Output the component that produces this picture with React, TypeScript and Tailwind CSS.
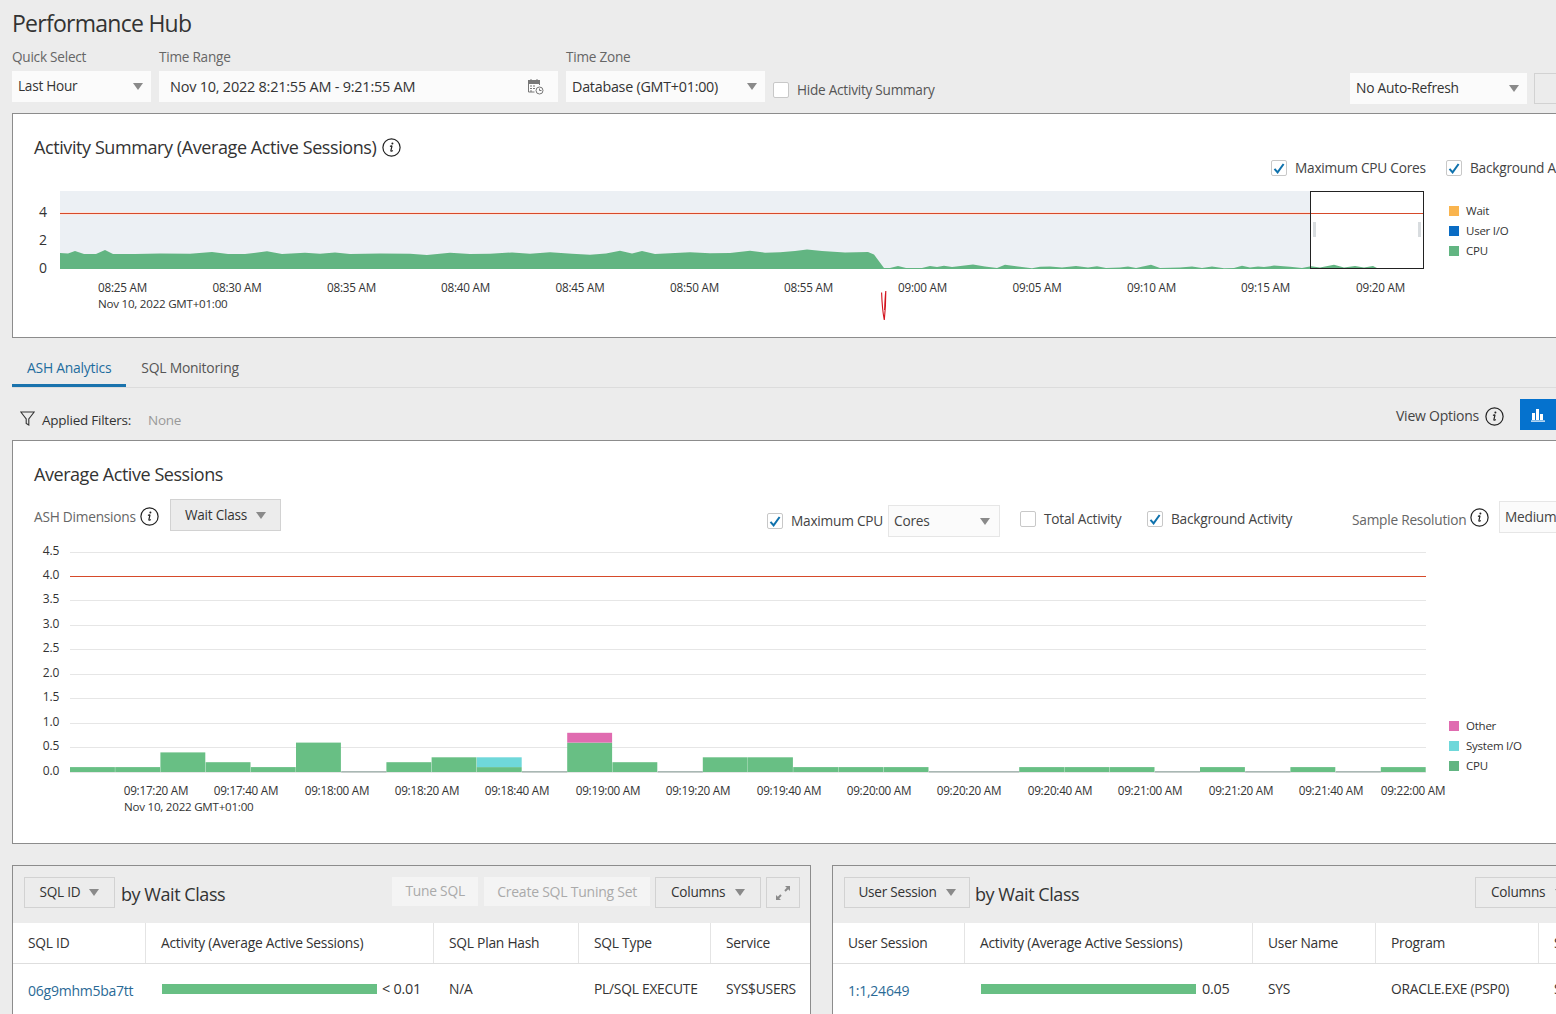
import type { ReactNode } from 'react';

const Caret = ({ className = 'ml-2' }: { className?: string }) => (
  <svg width="10" height="7" viewBox="0 0 10 7" className={`shrink-0 ${className}`}>
    <polygon points="0,0 10,0 5,7" fill="#8a8a8a" />
  </svg>
);

const InfoIcon = ({ size = 19 }: { size?: number }) => (
  <svg width={size} height={size} viewBox="0 0 19 19" className="shrink-0">
    <circle cx="9.5" cy="9.5" r="8.6" fill="none" stroke="#222" strokeWidth="1.2" />
    <circle cx="10.4" cy="5.4" r="1" fill="#222" />
    <path d="M8 8.4c1-.7 2-.9 1.9 0l-1 4.2c-.1.9.8.8 1.9 0" fill="none" stroke="#222" strokeWidth="1.2" />
  </svg>
);

const Check = ({ checked = true }: { checked?: boolean }) => (
  <span className="flex h-4 w-4 shrink-0 items-center justify-center rounded-[2px] border border-[#c8c8c8] bg-white">
    {checked && (
      <svg width="12" height="11" viewBox="0 0 12 11">
        <path d="M1.5 5.8 4.6 9.4 10.6 1" fill="none" stroke="#0f72ad" strokeWidth="2" />
      </svg>
    )}
  </span>
);

const Select = ({ label, className }: { label: string; className: string }) => (
  <div className={`flex items-center justify-between bg-[#fbfbfb] pl-[6px] pr-[8px] text-[#333] ${className}`}>
    <span className="whitespace-nowrap">{label}</span>
    <Caret />
  </div>
);

const Btn = ({ children, className }: { children: ReactNode; className: string }) => (
  <div className={`flex h-[31px] items-center justify-center whitespace-nowrap border border-[#d2d2d2] bg-[#ececec] text-[13.6px] text-[#333] ${className}`}>
    {children}
  </div>
);

const Legend = ({ items, className }: { items: [string, string][]; className: string }) => (
  <div className={`flex flex-col ${className}`}>
    {items.map(([name, color]) => (
      <div key={name} className="flex h-5 items-center gap-[7px] whitespace-nowrap text-[11.5px] text-[#333]">
        <span className="h-[10px] w-[10px]" style={{ backgroundColor: color }} />
        {name}
      </div>
    ))}
  </div>
);

const summaryTicks: [number, string][] = [
  [122.5, '08:25 AM'], [237, '08:30 AM'], [351.5, '08:35 AM'], [465.5, '08:40 AM'],
  [580, '08:45 AM'], [694.5, '08:50 AM'], [808.5, '08:55 AM'], [922.5, '09:00 AM'],
  [1037, '09:05 AM'], [1151.5, '09:10 AM'], [1265.5, '09:15 AM'], [1380.5, '09:20 AM'],
];

const summaryArea = [
  [60, 253], [68, 253.5], [75, 251], [84, 254], [96, 254], [105, 250], [113, 254], [135, 254],
  [160, 253.5], [190, 253.7], [212, 252], [228, 254], [245, 254.1], [267, 251.3], [282, 253.9], [305, 252.7],
  [320, 253.8], [335, 252.5], [350, 253.9], [380, 253.5], [410, 253.7], [427, 255.1], [450, 252.7], [470, 254],
  [490, 253.7], [512, 252.5], [530, 253.8], [550, 252.3], [572, 253.7], [590, 254.8], [606, 253.5], [620, 250.7],
  [632, 253.5], [642, 251.1], [655, 253.9], [675, 253.1], [690, 252.3], [710, 253.3], [730, 252.9], [750, 250.7],
  [765, 252.7], [780, 252.3], [795, 250.9], [807, 249.5], [822, 251.1], [845, 252.5], [868, 251.9], [874, 254.5],
  [884, 268], [890, 268], [898, 266], [906, 268], [922, 268], [930, 266], [937, 267], [944, 265.8], [952, 267],
  [973, 264.6], [985, 266.6], [997, 268], [1005, 264.8], [1020, 266.8], [1032, 268.2], [1040, 266.8], [1050, 266.5],
  [1062, 267.6], [1076, 266], [1088, 267.6], [1097, 266.2], [1106, 268], [1120, 267.6], [1128, 266.4], [1136, 268],
  [1151, 264.8], [1160, 268], [1180, 267.6], [1192, 266.4], [1202, 268], [1212, 266.4], [1224, 268.2], [1234, 268],
  [1242, 265.8], [1250, 267.6], [1258, 266.4], [1264, 267], [1274, 265.6], [1290, 266.8], [1302, 268], [1311, 266.2],
  [1320, 267.6], [1334, 264.8], [1344, 267.6], [1355, 266], [1364, 267.6], [1373, 266], [1378, 268.6],
];
const summaryPath = `M60 269 L${summaryArea.map(([x, y]) => `${x} ${y}`).join(' L')} L1378 269 Z`;

const SummaryChart = () => (
  <svg width="1436" height="135" viewBox="13 185 1436 135" className="shrink-0">
    <rect x="60" y="191" width="1250" height="78" fill="#ecf0f4" />
    <rect x="60" y="212" width="1364" height="3" fill="#fbe6e0" />
    <rect x="1310" y="191" width="114" height="78" fill="#fff" />
    <path d={summaryPath} fill="#62b582" />
    <line x1="60" y1="213.5" x2="1424" y2="213.5" stroke="#d64a2a" />
    <rect x="1310.5" y="191.5" width="113" height="77" fill="none" stroke="#222" />
    <rect x="1313" y="222" width="3" height="15" fill="#d8dcdf" />
    <rect x="1418" y="222" width="3" height="15" fill="#d8dcdf" />
    {[['4', 217], ['2', 245], ['0', 273]].map(([t, y]) => (
      <text key={t} x="43" y={y} fontSize="14" fill="#333" textAnchor="middle">{t}</text>
    ))}
    {summaryTicks.map(([x, t]) => (
      <text key={t} x={x} y="292" fontSize="11.7" fill="#333" textAnchor="middle">{t}</text>
    ))}
    <text x="98" y="308" fontSize="11.6" fill="#333">Nov 10, 2022 GMT+01:00</text>
    <path d="M881.6 292.5c.3 9 1.2 20 2.7 27.5.9-8 1.5-19 1.5-29-.8 7-1 13-1.2 19" fill="none" stroke="#d3141f" strokeWidth="1.1" />
  </svg>
);

// cpu, system io, other
const bars: [number, number, number][] = [
  [0.1, 0, 0], [0.1, 0, 0], [0.4, 0, 0], [0.2, 0, 0], [0.1, 0, 0], [0.6, 0, 0], [0, 0, 0], [0.2, 0, 0], [0.3, 0, 0], [0.1, 0.2, 0],
  [0, 0, 0], [0.6, 0, 0.2], [0.2, 0, 0], [0, 0, 0], [0.3, 0, 0], [0.3, 0, 0], [0.1, 0, 0], [0.1, 0, 0], [0.1, 0, 0], [0, 0, 0],
  [0, 0, 0], [0.1, 0, 0], [0.1, 0, 0], [0.1, 0, 0], [0, 0, 0], [0.1, 0, 0], [0, 0, 0], [0.1, 0, 0], [0, 0, 0], [0.1, 0, 0],
];

const gridLines: [string, number][] = [
  ['4.5', 552], ['4.0', 576], ['3.5', 600], ['3.0', 625], ['2.5', 649], ['2.0', 674], ['1.5', 698], ['1.0', 723], ['0.5', 747], ['0.0', 772],
];

const ashTicks: [number, string][] = [
  [156, '09:17:20 AM'], [246, '09:17:40 AM'], [337, '09:18:00 AM'], [427, '09:18:20 AM'], [517, '09:18:40 AM'],
  [608, '09:19:00 AM'], [698, '09:19:20 AM'], [789, '09:19:40 AM'], [879, '09:20:00 AM'], [969, '09:20:20 AM'],
  [1060, '09:20:40 AM'], [1150, '09:21:00 AM'], [1241, '09:21:20 AM'], [1331, '09:21:40 AM'], [1413, '09:22:00 AM'],
];

const AshChart = () => (
  <svg width="1436" height="280" viewBox="13 540 1436 280" className="shrink-0">
    {gridLines.map(([label, y]) => (
      <g key={label}>
        <line x1="70" y1={y + 0.5} x2="1426" y2={y + 0.5} stroke={label === '4.0' ? '#d64a2a' : '#e6e6e6'} />
        <text x="59" y={y + 3} fontSize="12" fill="#333" textAnchor="end">{label}</text>
      </g>
    ))}
    {bars.map(([cpu, io, other], i) => {
      const x = 70 + i * 45.2;
      const unit = 49;
      if (cpu === 0) return <rect key={i} x={x} y="771" width="45.2" height="1.5" fill="#a9b8b4" />;
      return (
        <g key={i}>
          <rect x={x} y={772 - cpu * unit} width="44.9" height={cpu * unit} fill="#68bf84" />
          {io > 0 && <rect x={x} y={772 - (cpu + io) * unit} width="44.9" height={io * unit} fill="#6fd8da" />}
          {other > 0 && <rect x={x} y={772 - (cpu + other) * unit} width="44.9" height={other * unit} fill="#e06bb0" />}
        </g>
      );
    })}
    {ashTicks.map(([x, t]) => (
      <text key={t} x={x} y="795" fontSize="11.7" fill="#333" textAnchor="middle">{t}</text>
    ))}
    <text x="124" y="811" fontSize="11.6" fill="#333">Nov 10, 2022 GMT+01:00</text>
  </svg>
);

const Cell = ({ children, last }: { children: ReactNode; last?: boolean }) => (
  <div className={`flex h-10 items-center whitespace-nowrap pl-[15px] text-[13.8px] text-[#333] ${last ? '' : 'border-r border-[#e4e4e4]'}`}>
    {children}
  </div>
);

const RowCell = ({ children }: { children: ReactNode }) => (
  <div className="flex h-[50px] items-center whitespace-nowrap pl-[15px] text-[13.8px] text-[#333]">{children}</div>
);

const App = () => (
  <div className="h-[1014px] w-[1556px] overflow-hidden bg-[#ececec] font-['Open_Sans',sans-serif] tracking-[-0.015em] text-[#333]">
    <div className="pl-3">
      <div className="flex h-[46px] items-center text-[23px] tracking-[-0.032em] text-[#333]">Performance Hub</div>

      {/* toolbar */}
      <div className="flex h-[67px] items-start text-[13.6px]">
        <div className="w-[147px] shrink-0">
          <div className="flex h-[25px] items-center pb-[3px] text-[#666]">Quick Select</div>
          <Select label="Last Hour" className="h-[31px] w-[139px]" />
        </div>
        <div className="w-[407px] shrink-0">
          <div className="flex h-[25px] items-center pb-[3px] text-[#666]">Time Range</div>
          <div className="flex h-[31px] w-[399px] items-center justify-between bg-[#fbfbfb] pl-[11px] pr-[14px] text-[14.5px]">
            Nov 10, 2022 8:21:55 AM - 9:21:55 AM
            <svg width="17" height="17" viewBox="0 0 17 17" fill="none" stroke="#777">
              <path d="M1.5 3h11v4M1.5 3v11h6" />
              <rect x="1.5" y="2.5" width="11" height="3" fill="#777" />
              <path d="M4 1v2M10 1v2M3 8h2M6 8h2M3 10.5h2M6 10.5h2M3 13h2" />
              <circle cx="12.5" cy="12.5" r="3.5" />
              <path d="M12.5 10.5v2h2" />
            </svg>
          </div>
        </div>
        <div className="w-[207px] shrink-0">
          <div className="flex h-[25px] items-center pb-[3px] text-[#666]">Time Zone</div>
          <Select label="Database (GMT+01:00)" className="h-[31px] w-[199px] text-[14.3px]" />
        </div>
        <div className="mt-[34px] flex w-[577px] shrink-0 items-center gap-2 whitespace-nowrap text-[#555]">
          <Check checked={false} />
          Hide Activity Summary
        </div>
        <Select label="No Auto-Refresh" className="mt-[27px] h-[31px] w-[177px] shrink-0 text-[13.8px]" />
        <div className="ml-[7px] mt-[27px] h-[31px] w-[60px] shrink-0 border border-[#d2d2d2] bg-[#ececec]" />
      </div>

      {/* activity summary */}
      <div className="h-[225px] w-[1600px] border border-[#8c8c8c] bg-white">
        <div className="ml-[21px] mt-[21px] flex h-6 items-center gap-[6px] text-[18px] tracking-[-0.023em] text-[#333]">
          Activity Summary (Average Active Sessions)
          <InfoIcon />
        </div>
        <div className="flex h-[18px] items-center pl-[1258px] text-[13.7px] text-[#444]">
          <Check />
          <span className="ml-2 w-[151px] whitespace-nowrap">Maximum CPU Cores</span>
          <Check />
          <span className="ml-2 whitespace-nowrap">Background Activity</span>
        </div>
        <div className="mt-2 flex">
          <SummaryChart />
          <Legend
            className="mt-4"
            items={[['Wait', '#f9b44e'], ['User I/O', '#0a6cc4'], ['CPU', '#62b582']]}
          />
        </div>
      </div>

      {/* tabs */}
      <div className="mt-[12px] flex h-[38px] border-b border-[#dcdcdc] text-[13.9px]">
        <div className="flex h-[37px] items-center border-b-[3px] border-[#1a73ad] px-[15px] pt-[2px] text-[#1e6c9e]">ASH Analytics</div>
        <div className="flex h-[37px] items-center px-[15px] pb-[1px] text-[#555]">SQL Monitoring</div>
      </div>

      {/* filters */}
      <div className="mb-[10px] mt-[11px] flex h-[31px] items-center text-[13.5px]">
        <div className="ml-[8px] mt-[11px] flex items-center">
          <svg width="15" height="15" viewBox="0 0 15 15" fill="none" stroke="#333" strokeWidth="1.1" className="-mt-[3px]">
            <path d="M.8 1h13.4L8.8 8v6L6.2 12.5V8z" />
          </svg>
          <span className="ml-[7px] w-[106px] whitespace-nowrap text-[#333]">Applied Filters:</span>
          <span className="text-[#999]">None</span>
        </div>
        <div className="ml-auto flex items-center">
          <span className="mt-[1px] whitespace-nowrap text-[14px] text-[#444]">View Options</span>
          <span className="ml-[6px] mt-[3px]"><InfoIcon /></span>
          <div className="ml-[16px] flex h-[31px] w-[36px] items-center justify-center bg-[#0572ce]">
            <svg width="15" height="14" viewBox="0 0 15 14" fill="#fff">
              <rect x="1" y="5" width="3" height="7" />
              <rect x="5" y="1" width="3" height="11" />
              <rect x="9" y="6" width="3" height="6" />
              <rect x="0" y="12.5" width="14" height="1.2" />
            </svg>
          </div>
        </div>
      </div>

      {/* average active sessions */}
      <div className="h-[404px] w-[1600px] border border-[#8c8c8c] bg-white">
        <div className="ml-[21px] mt-[22px] flex h-[22px] items-center text-[18px] tracking-[-0.025em]">Average Active Sessions</div>
        <div className="mt-[14px] flex h-[38px] items-start text-[13.7px]">
          <span className="ml-[21px] mt-[8px] w-[106px] whitespace-nowrap text-[#666]">ASH Dimensions</span>
          <span className="mt-[8px]"><InfoIcon /></span>
          <Btn className="ml-[11px] h-[32px] w-[111px]">
            Wait Class
            <Caret className="ml-[9px]" />
          </Btn>
          <span className="ml-[486px] mt-[14px]"><Check /></span>
          <span className="ml-2 mt-[12px] w-[97px] whitespace-nowrap text-[#444]">Maximum CPU</span>
          <div className="mt-[6px] flex h-[32px] w-[112px] items-center justify-between border border-[#e6e6e6] bg-[#fbfbfb] pl-[5px] pr-[9px] text-[#444]">
            Cores
            <Caret />
          </div>
          <span className="ml-[20px] mt-[12px]"><Check checked={false} /></span>
          <span className="ml-2 mt-[10px] w-[103px] whitespace-nowrap text-[#444]">Total Activity</span>
          <span className="mt-[12px]"><Check /></span>
          <span className="ml-2 mt-[10px] w-[181px] whitespace-nowrap text-[#444]">Background Activity</span>
          <span className="mt-[11px] w-[118px] whitespace-nowrap text-[#666]">Sample Resolution</span>
          <span className="mt-[9px]"><InfoIcon /></span>
          <div className="ml-[10px] mt-[2px] flex h-[32px] w-[90px] items-center border border-[#e6e6e6] bg-[#fbfbfb] pl-[5px] text-[#444]">
            Medium
          </div>
        </div>
        <div className="mt-[3px] flex">
          <AshChart />
          <Legend
            className="mt-[176px]"
            items={[['Other', '#e06bb0'], ['System I/O', '#6fd8da'], ['CPU', '#62b582']]}
          />
        </div>
      </div>

      {/* tables */}
      <div className="mt-[21px] flex">
        <div className="h-[160px] w-[799px] shrink-0 border-x border-t border-[#8c8c8c]">
          <div className="flex h-[57px] items-start pl-[11px] pt-[11px]">
            <Btn className="w-[91px]">
              SQL ID
              <Caret className="ml-[9px]" />
            </Btn>
            <span className="ml-[6px] mt-[4px] whitespace-nowrap text-[18px] tracking-[-0.025em]">by Wait Class</span>
            <div className="ml-[167px] flex h-[29px] w-[86px] items-center justify-center bg-[#f4f4f4] text-[13.8px] text-[#aaa]">Tune SQL</div>
            <div className="ml-[6px] flex h-[29px] w-[166px] items-center justify-center whitespace-nowrap bg-[#f4f4f4] text-[14px] text-[#aaa]">Create SQL Tuning Set</div>
            <Btn className="ml-[5px] w-[106px]">
              Columns
              <Caret className="ml-[10px]" />
            </Btn>
            <Btn className="ml-[5px] w-[34px]">
              <svg width="16" height="16" viewBox="0 0 16 16" fill="#8a8a8a">
                <path d="M10 1h5v5l-1.8-1.8-2.5 2.5-1.4-1.4 2.5-2.5zM6 15H1v-5l1.8 1.8 2.5-2.5 1.4 1.4-2.5 2.5z" />
              </svg>
            </Btn>
          </div>
          <div className="bg-white">
            <div className="grid grid-cols-[133px_288px_145px_132px_1fr] border-b border-[#dedede]">
              <Cell>SQL ID</Cell>
              <Cell>Activity (Average Active Sessions)</Cell>
              <Cell>SQL Plan Hash</Cell>
              <Cell>SQL Type</Cell>
              <Cell last>Service</Cell>
            </div>
            <div className="grid grid-cols-[133px_288px_145px_132px_1fr]">
              <RowCell><span className="mt-[2px] text-[14px] text-[#2a6a96]">06g9mhm5ba7tt</span></RowCell>
              <RowCell>
                <span className="ml-px h-[10px] w-[215px] shrink-0 bg-[#68bf84]" />
                <span className="ml-[5px] text-[14.4px]">&lt; 0.01</span>
              </RowCell>
              <RowCell>N/A</RowCell>
              <RowCell>PL/SQL EXECUTE</RowCell>
              <RowCell>SYS$USERS</RowCell>
            </div>
          </div>
        </div>

        <div className="ml-[21px] h-[160px] w-[800px] shrink-0 border-x border-t border-[#8c8c8c]">
          <div className="flex h-[57px] items-start pl-[11px] pt-[11px]">
            <Btn className="w-[126px]">
              User Session
              <Caret className="ml-[9px]" />
            </Btn>
            <span className="ml-[5px] mt-[4px] whitespace-nowrap text-[18px] tracking-[-0.025em]">by Wait Class</span>
            <Btn className="ml-[396px] w-[106px]">
              Columns
              <Caret className="ml-[10px]" />
            </Btn>
          </div>
          <div className="bg-white">
            <div className="grid grid-cols-[132px_288px_123px_163px_1fr] border-b border-[#dedede]">
              <Cell>User Session</Cell>
              <Cell>Activity (Average Active Sessions)</Cell>
              <Cell>User Name</Cell>
              <Cell>Program</Cell>
              <Cell last>Service</Cell>
            </div>
            <div className="grid grid-cols-[132px_288px_123px_163px_1fr]">
              <RowCell><span className="mt-[2px] text-[14px] text-[#2a6a96]">1:1,24649</span></RowCell>
              <RowCell>
                <span className="ml-px h-[10px] w-[215px] shrink-0 bg-[#68bf84]" />
                <span className="ml-[6px] text-[14.4px]">0.05</span>
              </RowCell>
              <RowCell>SYS</RowCell>
              <RowCell>ORACLE.EXE (PSP0)</RowCell>
              <RowCell>SYS$USERS</RowCell>
            </div>
          </div>
        </div>
      </div>
    </div>
  </div>
);

export default App;
